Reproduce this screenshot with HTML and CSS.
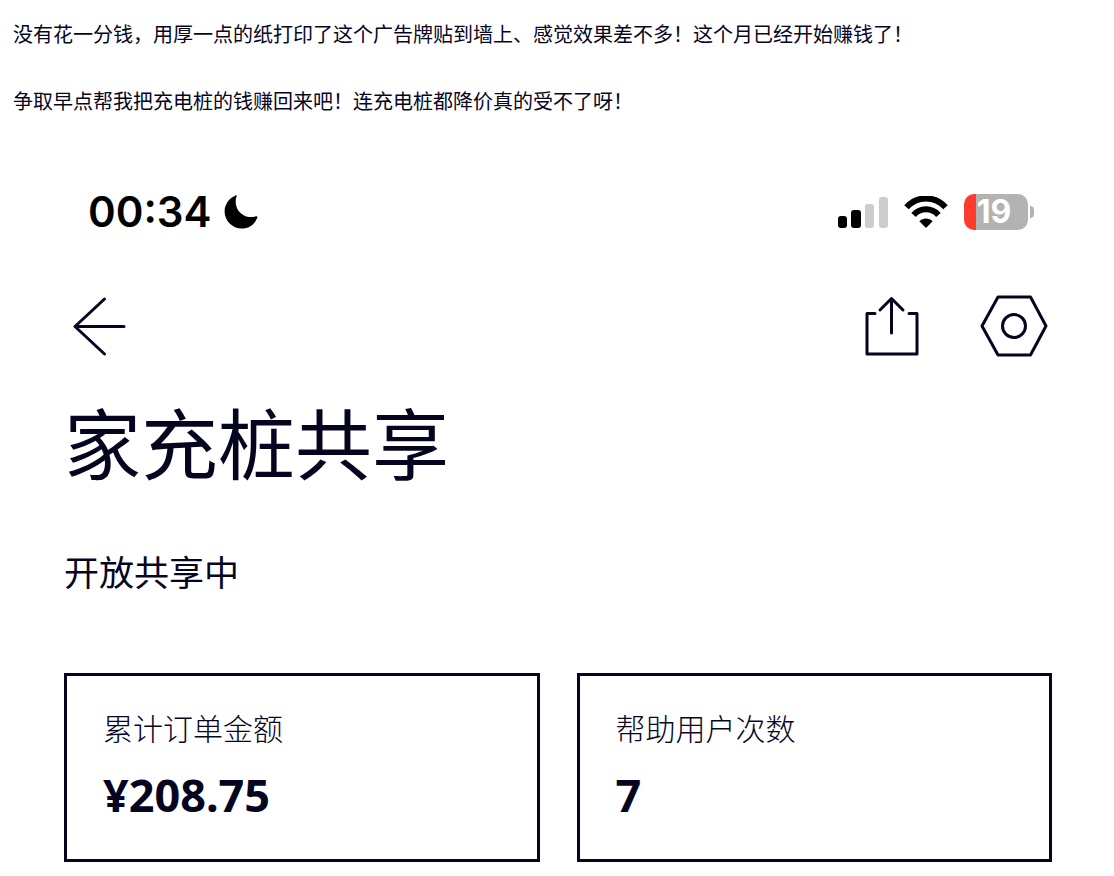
FILE: index.html
```
<!DOCTYPE html>
<html lang="zh-CN">

<head>
    <meta charset="utf-8">
    <meta name="viewport" content="width=device-width, initial-scale=1">
    <title>家充桩共享</title>
    <link rel="stylesheet" href="styles.css">
</head>

<body>
    <article class="post">
        <p>没有花一分钱，用厚一点的纸打印了这个广告牌贴到墙上、感觉效果差不多！这个月已经开始赚钱了！</p>
        <p>争取早点帮我把充电桩的钱赚回来吧！连充电桩都降价真的受不了呀！</p>
    </article>

    <main class="phone">
        <div class="status-bar">
            <div class="status-left">
                <span class="time">00:34</span>
                <svg class="moon" width="34" height="34" viewBox="0 0 34 34">
                    <path d="M12.6 1.2C11.4 4 11.4 8 12.4 11.4C15 19.6 23.5 23.6 31.2 21.4C33 20.8 34 21.4 33.2 23C30.6 29.4 24.8 33.6 17.8 33.6C8.4 33.6 .6 26 .6 16.6C.6 9.4 5 3.4 11 .7C12.4 .1 13 .2 12.6 1.2Z"/>
                </svg>
            </div>
            <div class="status-right">
                <svg width="50" height="32" viewBox="0 0 50 32">
                    <rect x="0" y="20" width="9" height="12" rx="3"/>
                    <rect x="13" y="14" width="10" height="18" rx="3"/>
                    <rect class="bar-off" x="27" y="8" width="9" height="24" rx="3"/>
                    <rect class="bar-off" x="41" y="1" width="9" height="31" rx="3"/>
                </svg>
                <svg width="44" height="32" viewBox="0 0 44 32">
                    <path class="wifi" d="M2.5 11.3C13-.6 31-.6 41.5 11.3"/>
                    <path class="wifi" d="M9.6 18.9C16.2 11.4 27.8 11.4 34.4 18.9"/>
                    <path d="M15.4 25.2C19 21.6 25 21.6 28.6 25.2L22.8 31.2Q22 32 21.2 31.2Z"/>
                </svg>
                <div class="battery">
                    <span class="battery-body">19</span>
                    <span class="battery-tip"></span>
                </div>
            </div>
        </div>

        <nav class="toolbar">
            <button class="icon-btn" type="button" aria-label="返回">
                <svg width="54" height="60" viewBox="0 0 54 60">
                    <path d="M32.5 3L3 30.5L32.5 58M3 30.5H52"/>
                </svg>
            </button>
            <div class="toolbar-right">
                <button class="icon-btn" type="button" aria-label="分享">
                    <svg width="56" height="60" viewBox="0 0 56 60">
                        <path d="M11 17.5H3V58H53V17.5H45M27.5 37V3M16 14L27.5 2.5L39 14"/>
                    </svg>
                </button>
                <button class="icon-btn" type="button" aria-label="设置">
                    <svg width="68" height="62" viewBox="0 0 68 62">
                        <path d="M18 2H50.5L66 31L50.5 60H18L2 31Z"/>
                        <circle cx="34" cy="31" r="11.5"/>
                    </svg>
                </button>
            </div>
        </nav>

        <h1>家充桩共享</h1>
        <p class="state">开放共享中</p>

        <section class="cards">
            <div class="card">
                <div class="card-label">累计订单金额</div>
                <div class="card-value">¥208.75</div>
            </div>
            <div class="card">
                <div class="card-label">帮助用户次数</div>
                <div class="card-value">7</div>
            </div>
        </section>
    </main>
</body>

</html>
```

FILE: styles.css
```
* {
    box-sizing: border-box;
}

body {
    margin: 0;
    background: #fff;
    color: #05051f;
    font-family: "Noto Sans CJK SC", sans-serif;
}

.post {
    padding: 14px 13px 0;
}

.post p {
    margin: 0 0 27px;
    font-size: 20px;
    line-height: 40px;
}

.phone {
    padding: 44px 62px 14px 64px;
}

.status-bar,
.status-left,
.status-right,
.toolbar,
.toolbar-right,
.battery {
    display: flex;
    align-items: center;
}

.status-bar,
.toolbar {
    justify-content: space-between;
}

.status-bar {
    height: 40px;
    padding: 0 18px 0 24px;
    color: #000;
}

.status-left {
    gap: 12px;
}

.status-right {
    gap: 16px;
}

.time {
    font-family: Inter, sans-serif;
    font-size: 42px;
    font-weight: 600;
    line-height: 40px;
}

.bar-off {
    fill: #ccc;
}

.wifi {
    fill: none;
    stroke: #000;
    stroke-width: 6;
}

.battery {
    gap: 2px;
}

.battery-body {
    width: 64px;
    height: 36px;
    padding-right: 4px;
    border-radius: 10px;
    background: linear-gradient(to right, #ff3b30 12px, #b3b3b3 12px);
    color: #fff;
    font-family: Inter, sans-serif;
    font-size: 32px;
    font-weight: 700;
    line-height: 36px;
    text-align: center;
}

.battery-tip {
    width: 4px;
    height: 12px;
    border-radius: 0 4px 4px 0;
    background: #b3b3b3;
}

.toolbar {
    margin-top: 63px;
    padding: 0 4px 0 8px;
}

.toolbar-right {
    gap: 60px;
}

.icon-btn {
    padding: 0;
    border: 0;
    background: none;
    cursor: pointer;
}

.icon-btn svg {
    display: block;
    fill: none;
    stroke: #05051f;
    stroke-width: 3;
    stroke-linecap: round;
    stroke-linejoin: round;
}

h1 {
    margin: 34px 0 0;
    font-size: 77px;
    font-weight: 400;
    line-height: 100px;
}

.state {
    margin: 55px 0 0;
    font-size: 35px;
    line-height: 50px;
}

.cards {
    display: grid;
    grid-template-columns: 1fr 1fr;
    gap: 37px;
    margin-top: 77px;
}

.card {
    padding: 31px 36px 34px;
    border: 3px solid #05051f;
}

.card-label {
    font-size: 30px;
    font-weight: 300;
    line-height: 40px;
}

.card-value {
    margin-top: 18px;
    font-family: "Noto Sans", sans-serif;
    font-size: 45px;
    font-weight: 700;
    line-height: 60px;
}
```
